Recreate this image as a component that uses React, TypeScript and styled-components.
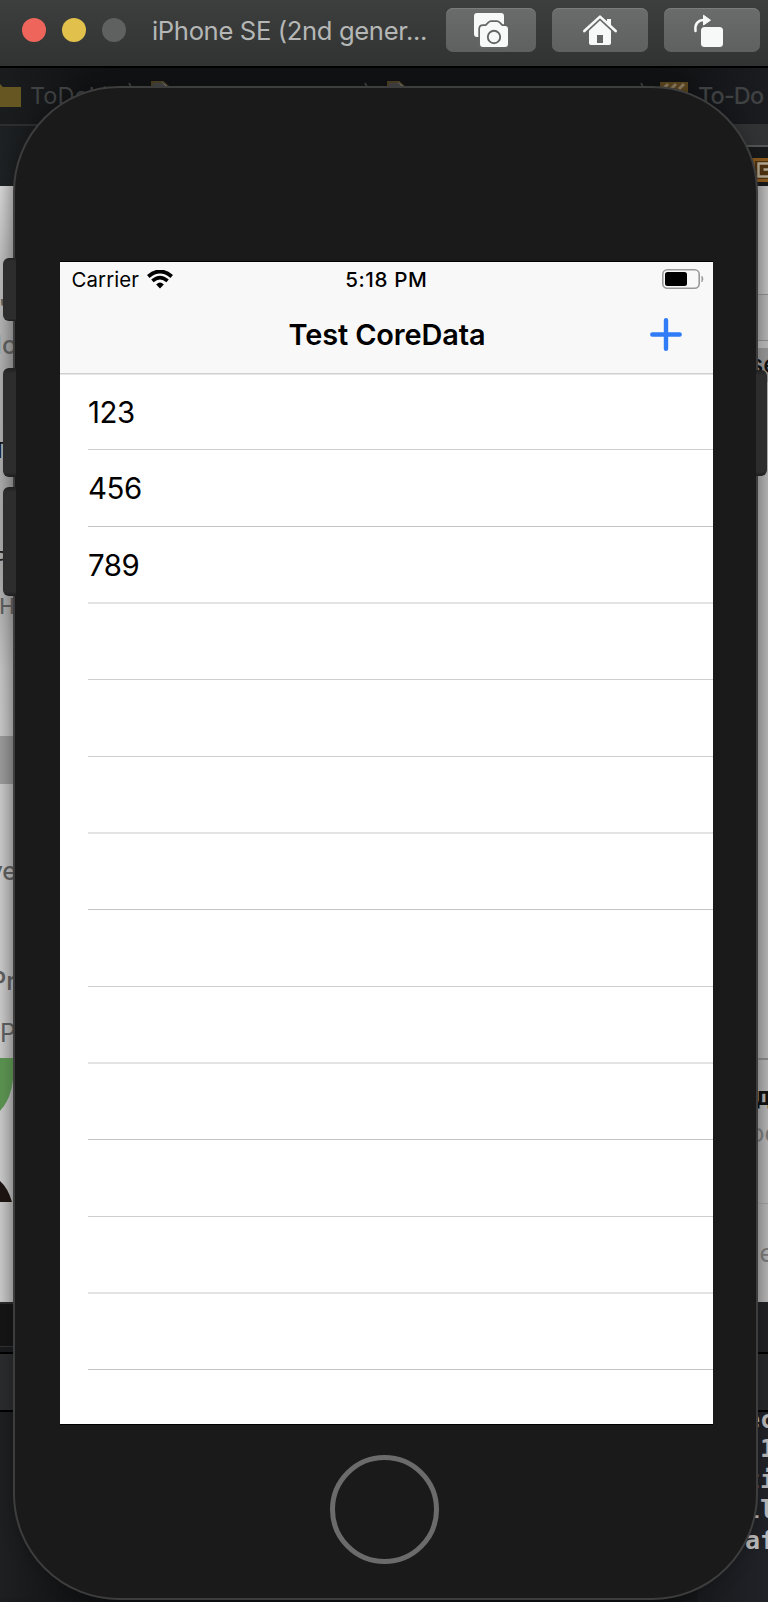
import React from "react";
import styled, { createGlobalStyle } from "styled-components";

const Global = createGlobalStyle`
  * { box-sizing: border-box; }
  body { margin: 0; background: #17191b; font-family: Inter, "Liberation Sans", sans-serif; }
`;

const Window = styled.div`
  width: 768px;
  height: 1602px;
  overflow: hidden;
  display: flex;
  flex-direction: column;
`;

const TitleBar = styled.header`
  height: 68px;
  flex: none;
  display: flex;
  align-items: flex-start;
  padding: 8px 8px 0 22px;
  background: linear-gradient(#3d3f3e, #313332);
  border-bottom: 2px solid #000;
`;

const Lights = styled.div`
  display: flex;
  gap: 16px;
  padding-top: 10px;
`;

const Light = styled.span<{ $color: string }>`
  width: 24px;
  height: 24px;
  border-radius: 50%;
  background: ${(p) => p.$color};
`;

const WindowTitle = styled.div`
  margin: 7px 0 0 26px;
  width: 294px;
  font-size: 25.6px;
  line-height: 32px;
  letter-spacing: -0.35px;
  white-space: nowrap;
  color: #b5b7b6;
`;

const ToolButton = styled.button<{ $width: number; $gap?: number }>`
  width: ${(p) => p.$width}px;
  height: 44px;
  flex: none;
  margin: 0 0 0 ${(p) => p.$gap ?? 0}px;
  padding: 0;
  border: 0;
  border-radius: 7px;
  background: linear-gradient(#6a6c6b, #5f6160);
  box-shadow: inset 0 1px 0 #7b7d7c;
  svg { display: block; }
`;

const Stage = styled.main`
  flex: 1;
  min-height: 0;
  display: grid;
  grid-template: 1534px / 768px;
`;

const Backdrop = styled.div`
  grid-area: 1 / 1;
  display: flex;
  flex-direction: column;
  background: linear-gradient(90deg, #1b1d1f, #0e0f10 14%, #0e0f10 86%, #202126);
`;

const Crumbs = styled.div`
  height: 56px;
  flex: none;
  display: flex;
  align-items: flex-start;
  background: linear-gradient(90deg, #1a1c1e, #111214 12%, #111214 88%, #1b1c20);
  color: #3f4142;
  font-size: 23.5px;
  line-height: 28px;
  white-space: nowrap;
  svg { flex: none; display: block; }
`;

const CrumbText = styled.span<{ $gap: number; $width?: number; $tight?: boolean }>`
  width: ${(p) => (p.$width ? `${p.$width}px` : "auto")};
  margin: 14px 0 0 ${(p) => p.$gap}px;
  letter-spacing: ${(p) => (p.$tight ? "-0.9px" : "normal")};
  font-weight: ${(p) => (p.$tight ? 500 : 400)};
  flex: none;
`;

const Sides = styled.div`
  flex: 1;
  display: flex;
  justify-content: space-between;
`;

const Side = styled.div<{ $width: number }>`
  width: ${(p) => p.$width}px;
  display: flex;
  flex-direction: column;
`;

const Band = styled.div<{ $h: number; $bg: string; $top?: string }>`
  height: ${(p) => p.$h}px;
  flex: none;
  background: ${(p) => p.$bg};
  border-top: ${(p) => p.$top ?? "0"};
  svg { display: block; }
`;

const Peek = styled.div<{ $h: number; $size: number; $color?: string; $end: number; $weight?: number; $mono?: boolean }>`
  height: ${(p) => p.$h}px;
  display: flex;
  align-items: flex-end;
  justify-content: flex-end;
  margin-right: ${(p) => p.$end}px;
  font-family: ${(p) => (p.$mono ? '"DejaVu Sans Mono", monospace' : "inherit")};
  font-size: ${(p) => p.$size}px;
  font-weight: ${(p) => p.$weight ?? 400};
  line-height: 1;
  white-space: nowrap;
  color: ${(p) => p.$color ?? "#5c5c5c"};
`;

const Phone = styled.section`
  grid-area: 1 / 1;
  position: relative;
  z-index: 1;
  width: 745px;
  height: 1514px;
  margin: 18px 0 0 13px;
  padding: 173px 43px 0 45px;
  border: 2px solid #3d3d3d;
  border-radius: 106px;
  background: #1a1a1a;
  box-shadow: 0 0 16px rgba(0, 0, 0, 0.25);
`;

const SideKey = styled.i<{ $top: number; $h: number; $right?: boolean }>`
  position: absolute;
  top: ${(p) => p.$top}px;
  ${(p) => (p.$right ? "right: -11px" : "left: -12px")};
  width: ${(p) => (p.$right ? 11 : 13)}px;
  height: ${(p) => p.$h}px;
  border-radius: ${(p) => (p.$right ? "0 6px 6px 0" : "6px 0 0 6px")};
  background: linear-gradient(#202020, #2d2d2d 5%, #2d2d2d 96%, #1d1d1d);
`;

const Screen = styled.div`
  width: 653px;
  height: 1164px;
  border-top: 1px solid #000;
  border-bottom: 1px solid #000;
  background: #fff;
  color: #000;
`;

const NavArea = styled.div`
  height: 113px;
  background: #f8f8f8;
  border-bottom: 1px solid #e6e6e6;
  box-shadow: inset 0 -1px 0 #d0d0d0;
`;

const StatusBar = styled.div`
  height: 34px;
  display: grid;
  grid-template-columns: 1fr auto 1fr;
  align-items: center;
  padding: 0 9px 0 11.5px;
  svg { display: block; }
`;

const Carrier = styled.div`
  display: flex;
  align-items: center;
  gap: 7.5px;
  font-size: 20.4px;
  letter-spacing: 0.1px;
`;

const Clock = styled.div`
  margin-right: 3px;
  font-size: 20.6px;
  font-weight: 500;
  letter-spacing: 0.6px;
`;

const Battery = styled.div`
  display: flex;
  justify-content: flex-end;
`;

const NavBar = styled.div`
  height: 76px;
  display: grid;
  grid-template-columns: 1fr auto 1fr;
  align-items: center;
  padding: 0 31px 0 32px;
`;

const NavTitle = styled.h1`
  margin: 0;
  font-size: 28.9px;
  font-weight: 600;
  letter-spacing: -0.1px;
`;

const AddButton = styled.button`
  justify-self: end;
  padding: 0;
  border: 0;
  background: none;
  svg { display: block; }
`;

const List = styled.ul`
  margin: 0;
  padding: 0 0 0 28px;
  list-style: none;
`;

const Row = styled.li<{ $h: number; $line: string }>`
  height: ${(p) => p.$h}px;
  display: flex;
  align-items: center;
  padding-top: ${(p) => (p.$line.startsWith("2px") ? 2 : 0)}px;
  border-bottom: ${(p) => p.$line};
  font-size: 29.4px;
  letter-spacing: -0.4px;
`;

const HomeKey = styled.div`
  width: 109px;
  height: 109px;
  margin: 30px 0 0 270px;
  border: 5px solid #6b6b6b;
  border-radius: 50%;
`;

const DocIcon = () => (
  <svg width="22" height="30" viewBox="0 0 22 30">
    <path d="M1 30V1h11l9 8v21" fill="#444" stroke="#4b4024" strokeWidth="2" />
    <path d="M10 0l10 8-4-1z" fill="#777" />
  </svg>
);

const Chevron = () => (
  <svg width="10" height="26" viewBox="0 0 10 26">
    <path d="M2 1l6 12-6 12" fill="none" stroke="#3a3b3c" strokeWidth="2" />
  </svg>
);

const CameraIcon = () => (
  <svg width="90" height="44" viewBox="0 0 90 44">
    <path d="M31 5h24q3 0 3 3v18H33v3h-2q-3 0-3-3V8q0-3 3-3z" fill="#f7f9f8" />
    <path
      d="M37 18h3l3-3q1-1 2-1h6q1 0 2 1l3 3h3q3 0 3 3v15q0 3-3 3H37q-3 0-3-3V21q0-3 3-3z"
      fill="#f7f9f8" stroke="#646665" strokeWidth="3.4" paintOrder="stroke"
    />
    <circle cx="48" cy="29" r="6.2" fill="none" stroke="#646665" strokeWidth="1.9" />
  </svg>
);

const HomeIcon = () => (
  <svg width="96" height="44" viewBox="0 0 96 44">
    <path d="M55 11h4v9l-4-3.5z" fill="#f7f9f8" />
    <path d="M32.3 23L48 8.6 63.7 23" fill="none" stroke="#f7f9f8" strokeWidth="2.6" strokeLinecap="round" strokeLinejoin="round" />
    <path d="M48 12.6l11 10.2V35q0 2-2 2H39q-2 0-2-2V22.8z" fill="#f7f9f8" />
    <path d="M45 27h6v8h-6z" fill="#646665" />
  </svg>
);

const RotateIcon = () => (
  <svg width="96" height="44" viewBox="0 0 96 44">
    <rect x="37" y="19" width="22" height="20" rx="3.5" fill="#f7f9f8" />
    <path d="M31.5 23C30.5 16 34 12 40 12" fill="none" stroke="#f7f9f8" strokeWidth="2.5" strokeLinecap="round" />
    <path d="M39.5 7.2l7 5-7 4.8z" fill="#f7f9f8" stroke="#f7f9f8" strokeLinejoin="round" />
  </svg>
);

const WifiIcon = () => (
  <svg width="26" height="19" viewBox="0 0 26 19">
    <path d="M1.3 6.4Q13-3.4 24.7 6.4" fill="none" stroke="#000" strokeWidth="3.9" />
    <path d="M5.4 10.9Q13 4.3 20.6 10.9" fill="none" stroke="#000" strokeWidth="3.6" />
    <path d="M9.2 14.4Q13 10.7 16.8 14.4L13 18.6z" fill="#000" />
  </svg>
);

const BatteryIcon = () => (
  <svg width="42" height="20" viewBox="0 0 42 20">
    <rect x="0.8" y="0.8" width="36.4" height="18.4" rx="4.5" fill="none" stroke="#999" strokeWidth="1.6" />
    <rect x="3" y="3" width="22" height="14" rx="2.5" fill="#000" />
    <path d="M39.8 7q2.6 3 0 6z" fill="#999" stroke="#999" strokeWidth="0.6" />
  </svg>
);

const PlusIcon = () => (
  <svg width="32" height="33" viewBox="0 0 32 33">
    <path d="M16 2.3v28.4M2.3 16.5h27.4" stroke="#2f7cf6" strokeWidth="4.4" strokeLinecap="round" />
  </svg>
);

const plain = "1px solid #cfcfcf";
const crisp = "1px solid #c4c4c4";
const soft = "2px solid #e3e3e3";

const rows = [
  { text: "123", h: 75, line: plain },
  { text: "456", h: 77, line: crisp },
  { text: "789", h: 77, line: soft },
  { h: 76, line: plain },
  { h: 77, line: plain },
  { h: 77, line: soft },
  { h: 76, line: crisp },
  { h: 77, line: plain },
  { h: 77, line: soft },
  { h: 76, line: crisp },
  { h: 77, line: plain },
  { h: 77, line: soft },
  { h: 76, line: crisp },
];

const leftUpper =
  "linear-gradient(90deg, transparent, rgba(0,0,0,.17) 16px), linear-gradient(#d4d4d4, #b8b8b8 14%, #ababab 35%, #a6a6a6 70%, #c2c2c2 88%, #c6c6c6)";
const leftPale = "linear-gradient(90deg, #c8c8c8, #a4a4a4 16px)";
const rightGrey = "linear-gradient(90deg, #9d9d9d 58px, #b2b2b2)";

const consoleLines = [
  { text: "ec", h: 20 },
  { text: "1", h: 29 },
  { text: "ti", h: 31 },
  { text: "ll", h: 30 },
  { text: "af", h: 31 },
];

export default function App() {
  return (
    <>
      <Global />
      <Window>
        <TitleBar>
          <Lights>
            <Light $color="#ee665b" />
            <Light $color="#e1c04c" />
            <Light $color="#5f6160" />
          </Lights>
          <WindowTitle>iPhone SE (2nd gener...</WindowTitle>
          <ToolButton $width={90} aria-label="Screenshot"><CameraIcon /></ToolButton>
          <ToolButton $width={96} $gap={16} aria-label="Home"><HomeIcon /></ToolButton>
          <ToolButton $width={96} $gap={16} aria-label="Rotate"><RotateIcon /></ToolButton>
        </TitleBar>
        <Stage>
          <Backdrop>
            <Crumbs>
              <svg width="21" height="40" viewBox="0 0 21 40">
                <path d="M0 16l3 3h18v20H0z" fill="#665722" />
              </svg>
              <CrumbText $gap={9} $width={93}>ToDoList</CrumbText>
              <svg width="566" height="56" viewBox="0 0 566 56">
                <g transform="translate(4 14)"><Chevron /></g>
                <g transform="translate(28 13)"><DocIcon /></g>
                <g transform="translate(240 14)"><Chevron /></g>
                <g transform="translate(264 13)"><DocIcon /></g>
                <g transform="translate(516 14)"><Chevron /></g>
                <path d="M537 14h28v20h-28z" fill="#5b451d" />
                <path d="M540 21l5-5M548 21l5-5M556 21l5-5" stroke="#8a7b5e" strokeWidth="3" />
              </svg>
              <CrumbText $gap={9} $tight>To-Do</CrumbText>
            </Crumbs>
            <Sides>
              <Side $width={60}>
                <Band $h={62} $bg="linear-gradient(90deg, #1e2123, #141618)" $top="2px solid #2c2e30" />
                <Band $h={550} $bg={leftUpper}>
                  <Peek $h={132} $size={22} $end={54} $weight={600}>"</Peek>
                  <Peek $h={40} $size={25} $end={43} $weight={500}>lo</Peek>
                  <Peek $h={103} $size={22} $end={53} $color="#151515">T</Peek>
                  <Peek $h={108} $size={20} $end={53} $color="#222">P</Peek>
                  <Peek $h={48} $size={21} $end={45} $weight={500}>H</Peek>
                </Band>
                <Band $h={48} $bg="linear-gradient(90deg, #999, #838383 16px)" />
                <Band $h={274} $bg={leftPale}>
                  <Peek $h={100} $size={25} $end={43} $weight={500}>ye</Peek>
                  <Peek $h={110} $size={25} $end={44} $weight={500}>Pr</Peek>
                  <Peek $h={52} $size={25} $end={44}>P</Peek>
                </Band>
                <Band $h={145} $bg={leftPale}>
                  <svg width="60" height="145" viewBox="0 0 60 145">
                    <path d="M0 0h13q3 36-13 53z" fill="#5a9150" />
                    <path d="M0 123Q8 130 12 144H0z" fill="#1d1512" />
                  </svg>
                </Band>
                <Band $h={99} $bg={leftPale} />
                <Band $h={44} $bg="#151515" $top="2px solid #2a2a2a" />
                <Band $h={6} $bg="#191b1c" $top="1px solid #323232" />
                <Band $h={58} $bg="#292b2d" $top="2px solid #000" />
                <Band $h={188} $bg="linear-gradient(90deg, #1d1f21, #141516)" $top="2px solid #000" />
              </Side>
              <Side $width={70}>
                <Band $h={21} $bg="#313234" />
                <Band $h={41} $bg="#17191a" $top="2px solid #555">
                  <svg width="70" height="39" viewBox="0 0 70 39">
                    <path d="M52 11h18v24H52z" fill="#8a5a1e" />
                    <path d="M57 14h13v18H57z" fill="#4e3210" />
                    <path d="M70 16.500H60.500v13H70M70 22.500h-4.500" fill="none" stroke="#b3a78f" strokeWidth="2.4" />
                  </svg>
                </Band>
                <Band $h={108} $bg="linear-gradient(90deg, #a2a2a2 58px, #bdbdbd)" />
                <Band $h={46} $bg={rightGrey} $top="1px solid #888" />
                <Band $h={8} $bg="#b5b5b5" $top="1px solid #888" />
                <Band $h={34} $bg="#929292">
                  <Peek $h={29} $size={25} $end={-10} $color="#111" $weight={500}>se</Peek>
                </Band>
                <Band $h={676} $bg={rightGrey} />
                <Band $h={145} $bg={rightGrey} $top="2px solid #858585">
                  <Peek $h={49} $size={25} $end={-3} $color="#111" $weight={700} $mono>д</Peek>
                  <Peek $h={37} $size={25} $end={-11} $color="#777">oe</Peek>
                </Band>
                <Band $h={99} $bg={rightGrey} $top="1px solid #999">
                  <Peek $h={62} $size={25} $end={-6} $color="#777">e</Peek>
                </Band>
                <Band $h={50} $bg="#1f2123" />
                <Band $h={58} $bg="#252729" $top="2px solid #000" />
                <Band $h={192} $bg="linear-gradient(90deg, #18191c, #212227)" $top="2px solid #000">
                  {consoleLines.map((line) => (
                    <Peek key={line.text} $h={line.h} $size={25} $end={-7} $color="#b8b8b8" $weight={700} $mono>
                      {line.text}
                    </Peek>
                  ))}
                </Band>
              </Side>
            </Sides>
          </Backdrop>
          <Phone>
            <SideKey $top={170} $h={63} />
            <SideKey $top={280} $h={109} />
            <SideKey $top={399} $h={109} />
            <SideKey $top={282} $h={106} $right />
            <Screen>
              <NavArea>
                <StatusBar>
                  <Carrier>Carrier <WifiIcon /></Carrier>
                  <Clock>5:18 PM</Clock>
                  <Battery><BatteryIcon /></Battery>
                </StatusBar>
                <NavBar>
                  <span />
                  <NavTitle>Test CoreData</NavTitle>
                  <AddButton aria-label="Add"><PlusIcon /></AddButton>
                </NavBar>
              </NavArea>
              <List>
                {rows.map((row, i) => (
                  <Row key={i} $h={row.h} $line={row.line}>{row.text}</Row>
                ))}
              </List>
            </Screen>
            <HomeKey />
          </Phone>
        </Stage>
      </Window>
    </>
  );
}
